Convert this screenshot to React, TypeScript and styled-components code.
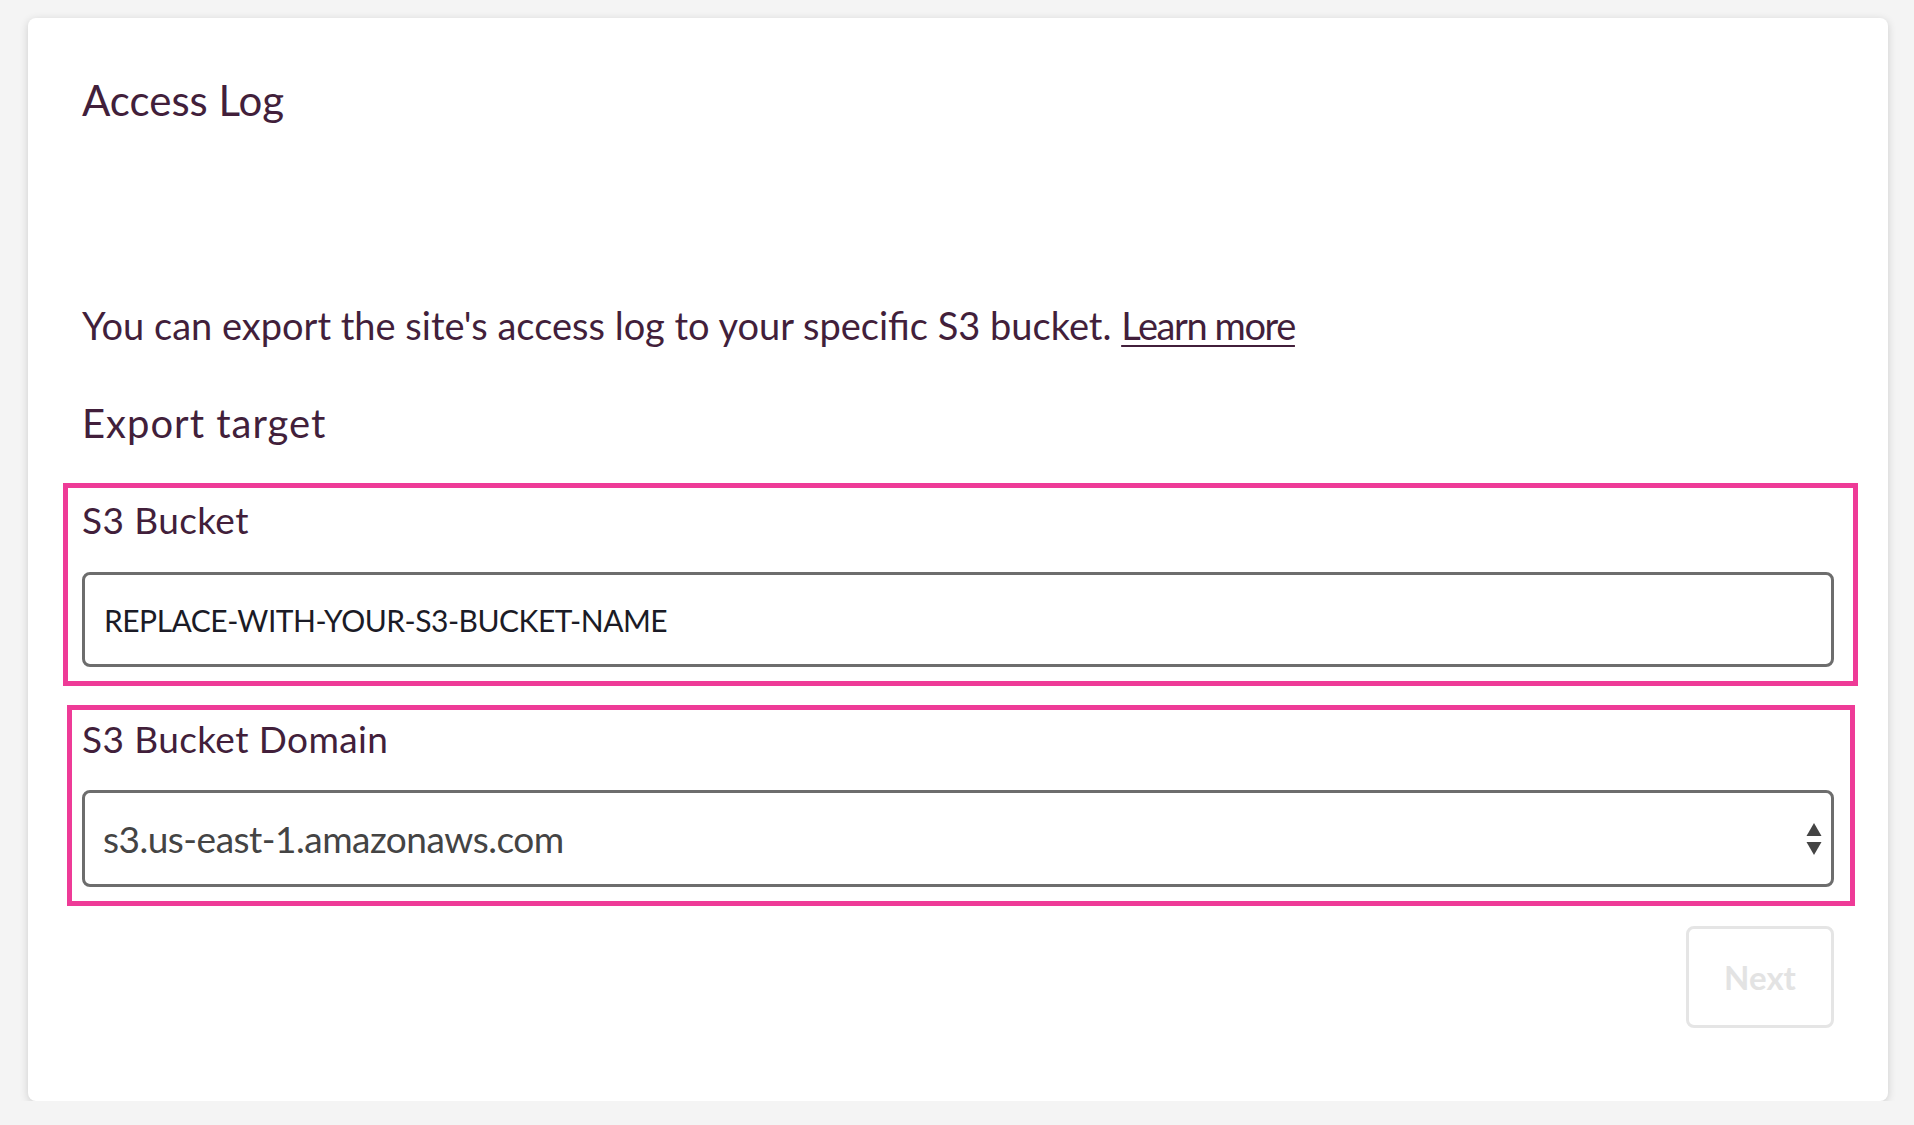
import React from 'react'
import styled, { createGlobalStyle } from 'styled-components'

const GlobalStyle = createGlobalStyle`
  html, body {
    margin: 0;
    padding: 0;
    background: #f4f4f4;
  }
  body {
    font-family: Lato, "Noto Sans", sans-serif;
    color: #421f3b;
  }
  * {
    box-sizing: border-box;
  }
`

const Card = styled.section`
  margin: 18px 26px 0 28px;
  padding: 55px 54px 73px 54px;
  background: #fff;
  border-radius: 8px;
  box-shadow: 0 2px 8px rgba(0, 0, 0, 0.16);
`

const Title = styled.h1`
  margin: 0;
  font-size: 42px;
  line-height: 54px;
  font-weight: 400;
`

const Intro = styled.p`
  margin: 174px 0 0;
  font-size: 38px;
  line-height: 48px;
  a {
    color: inherit;
    letter-spacing: -1.4px;
    text-decoration: underline;
    text-decoration-thickness: 2px;
    text-underline-offset: 5px;
  }
`

const SectionTitle = styled.h2`
  margin: 50px 0 0;
  font-size: 40px;
  line-height: 48px;
  font-weight: 400;
  letter-spacing: 1px;
`

// pink highlight around each field; offsets differ a bit between the two
const FieldGroup = styled.div<{ $top: number; $pad: [number, number, number, number] }>`
  margin-top: ${p => p.$top}px;
  margin-left: ${p => -(p.$pad[3] + 5)}px;
  margin-right: ${p => -(p.$pad[1] + 5)}px;
  padding: ${p => p.$pad.map(v => v + 'px').join(' ')};
  border: 5px solid #ee3b97;
`

const Label = styled.label`
  display: block;
  font-size: 37px;
  line-height: 44px;
  letter-spacing: 0.4px;
`

const TextInput = styled.input<{ $gap: number }>`
  display: block;
  width: 100%;
  height: 95px;
  margin-top: ${p => p.$gap}px;
  padding: 0 19px;
  border: 3px solid #6d6d6d;
  border-radius: 8px;
  font-family: Lato, sans-serif;
  font-size: 30px;
  letter-spacing: -0.5px;
  color: #1b1b26;
  background: #fff;
  outline: none;
`

const SelectWrap = styled.div<{ $gap: number }>`
  position: relative;
  margin-top: ${p => p.$gap}px;
  svg {
    position: absolute;
    right: 12px;
    top: 33px;
    pointer-events: none;
  }
`

const Select = styled.select`
  display: block;
  width: 100%;
  height: 97px;
  padding: 0 60px 0 18px;
  border: 3px solid #6d6d6d;
  border-radius: 8px;
  appearance: none;
  -webkit-appearance: none;
  background: #fff;
  font-family: Lato, sans-serif;
  font-size: 37px;
  letter-spacing: -0.5px;
  color: #444;
  outline: none;
`

const Footer = styled.div`
  display: flex;
  justify-content: flex-end;
  margin-top: 20px;
`

const NextButton = styled.button`
  width: 148px;
  height: 102px;
  border: 3px solid #e5e5e5;
  border-radius: 8px;
  background: #fff;
  font-family: Lato, sans-serif;
  font-weight: 700;
  font-size: 33px;
  color: #e3e3e3;
  cursor: not-allowed;
`

const UpDown = () => (
  <svg width="16" height="32" viewBox="0 0 16 32">
    <path d="M8 0 L15.5 13 L0.5 13 Z" fill="#444" />
    <path d="M0.5 19 L15.5 19 L8 32 Z" fill="#444" />
  </svg>
)

const App = () => {
  return (
    <>
      <GlobalStyle />
      <Card>
        <Title>Access Log</Title>
        <Intro>
          You can export the site's access log to your specific S3 bucket. <a href="#">Learn more</a>
        </Intro>
        <SectionTitle>Export target</SectionTitle>
        <FieldGroup $top={36} $pad={[10, 19, 14, 14]}>
          <Label htmlFor="bucket">S3 Bucket</Label>
          <TextInput id="bucket" $gap={30} readOnly value="REPLACE-WITH-YOUR-S3-BUCKET-NAME" />
        </FieldGroup>
        <FieldGroup $top={19} $pad={[7, 16, 14, 10]}>
          <Label htmlFor="domain">S3 Bucket Domain</Label>
          <SelectWrap $gap={29}>
            <Select id="domain" defaultValue="s3.us-east-1.amazonaws.com">
              <option>s3.us-east-1.amazonaws.com</option>
            </Select>
            <UpDown />
          </SelectWrap>
        </FieldGroup>
        <Footer>
          <NextButton disabled>Next</NextButton>
        </Footer>
      </Card>
    </>
  )
}

export default App
